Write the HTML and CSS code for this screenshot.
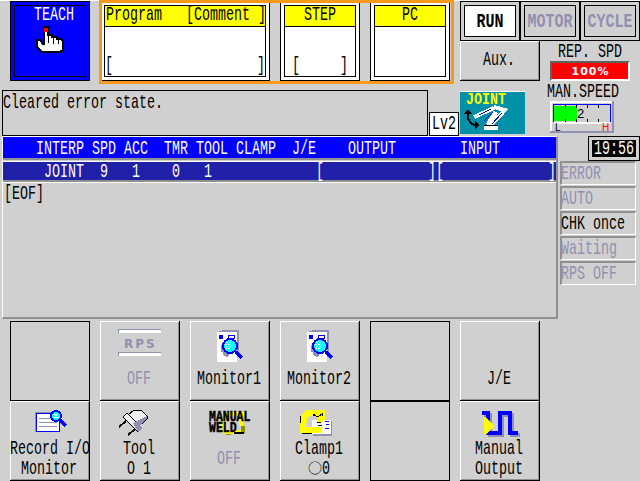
FILE: index.html
```
<!DOCTYPE html>
<html lang="en">
<head>
<meta charset="utf-8">
<title>Teach Pendant</title>
<link rel="stylesheet" href="styles.css">
</head>
<body>
<div id="top">
	<div class="left">
		<div class="header">
			<div class="frame teach">
				<div class="inner">
					<p class="t">TEACH</p>
					<svg class="hand" width="30" height="29" viewBox="35 27 30 29">
						<path d="M45 29h3v8h4v2h5v2h4l2 2v9l-3 2H42l-5-5v-7h3l3 4h1V29z" fill="#fff" stroke="#000" stroke-width="2"/>
						<path d="M48.500 37v8M53.500 39v7M58.500 41v5" stroke="#000"/>
						<path d="M44 30h4v4h-4z" fill="#f00"/>
					</svg>
				</div>
			</div>
			<div class="jobs">
				<div class="frame program">
					<div class="inner">
						<div class="title"><p class="t">Program   [Comment ]</p></div>
						<p class="t value">[                  ]</p>
					</div>
				</div>
				<div class="frame step">
					<div class="inner">
						<div class="title"><p class="t">STEP</p></div>
						<p class="t value">[     ]</p>
					</div>
				</div>
				<div class="frame pc">
					<div class="inner">
						<div class="title"><p class="t">PC</p></div>
					</div>
				</div>
			</div>
		</div>
		<div class="notice">
			<div class="message"><p class="t">Cleared error state.</p></div>
			<div class="level"><p class="t">Lv2</p></div>
		</div>
	</div>
	<div class="right">
		<div class="modes">
			<div class="frame run"><div class="inner"><p class="t">RUN</p></div></div>
			<div class="frame off"><div class="inner"><p class="t">MOTOR</p></div></div>
			<div class="frame off"><div class="inner"><p class="t">CYCLE</p></div></div>
		</div>
		<div class="controls">
			<div class="aux">
				<div class="key"><p class="t">Aux.</p></div>
				<svg class="joint" width="65" height="43" viewBox="0 0 65 43">
					<path d="M0 0h65v43H0z" fill="#0090a8"/>
					<path d="M0 .5h65" stroke="#fff"/>
					<path d="M8 21v7l3 4 3 2h4" fill="none" stroke="#000" stroke-width="2"/>
					<path d="M8 18l4 5H4zM20 34l-5-4v8z"/>
					<path d="M14 26l20-9M34 16l11 3-14 15" fill="none" stroke="#fff" stroke-width="4"/>
					<path d="M28 34l8-13" stroke="#fff" stroke-width="5"/>
					<path d="M24 35h14v4H24z" fill="#fff"/>
					<path d="M24 34.500h14" stroke="#000"/>
					<path d="M19 24l12-6M24 30l9-9M42 22l-10 11" stroke="#00f"/>
					<text x="6" y="11" class="jointText">JOINT</text>
				</svg>
			</div>
			<div class="speeds">
				<p class="t">REP. SPD</p>
				<div class="percent">100%</div>
				<p class="t man">MAN.SPEED</p>
				<svg class="meter" width="64" height="32" viewBox="0 0 64 32">
					<path d="M0 0h64v32H0z" fill="#9090b0"/>
					<path d="M0 0h62v30H0z" fill="#fff"/>
					<path d="M2 2h60v28H2z" fill="#d0d0d0"/>
					<path d="M4 21h56v2H4z" fill="#fff"/>
					<path d="M4 5h23v15H4z" fill="#0f0"/>
					<path d="M3.500 21V3.500h57V21" fill="none" stroke="#00f"/>
					<path d="M15.500 4v3M26.500 4v3M37.500 4v3M48.500 4v3M15.500 18v3M26.500 18v3M37.500 18v3M48.500 18v3" stroke="#000"/>
					<text x="27" y="17" class="num">2</text>
					<text x="5" y="30" class="lo">L</text>
					<text x="52" y="30" class="hi">H</text>
				</svg>
			</div>
		</div>
	</div>
</div>

<div id="middle">
	<div class="list">
		<div class="head"><p class="t">    INTERP SPD ACC  TMR TOOL CLAMP  J/E    OUTPUT        INPUT</p></div>
		<div class="row"><p class="t">     JOINT  9   1    0   1             [             ][             ]</p></div>
		<div class="eof"><p class="t">[EOF]</p></div>
	</div>
	<div class="side">
		<div class="clock"><div class="inner"><p class="t">19:56</p></div></div>
		<ul class="status">
			<li><p class="t">ERROR</p></li>
			<li><p class="t">AUTO</p></li>
			<li class="on"><p class="t">CHK once</p></li>
			<li><p class="t">Waiting</p></li>
			<li><p class="t">RPS OFF</p></li>
		</ul>
	</div>
</div>

<div id="keys">
	<div class="key empty"></div>
	<div class="key single off">
		<svg class="icon" width="80" height="46" viewBox="0 0 80 46">
			<path d="M18 8h43v4H18zM18 31h43v4H18z" fill="#fff"/>
			<path d="M18.500 12V8.500H61M18.500 35v-3.500H61" fill="none" stroke="#9090b0"/>
			<text x="24" y="27" class="rps">RPS</text>
		</svg>
		<p class="t">OFF</p>
	</div>
	<div class="key single">
		<svg class="icon" width="80" height="46" viewBox="0 0 80 46">
			<path d="M28 11l5-2h16v27h-4V11z" fill="#9090b0"/>
			<path d="M27 11h20v30H27z" fill="#fff"/>
			<path d="M31 24h7v8h1v3l-2 1-4-2v-3h-2z" fill="#9090b0"/>
			<path d="M29 14h4v4h-4z" fill="#00f"/>
			<path d="M38.500 14.500h6v3h-6z" fill="#fff" stroke="#00f"/>
			<path d="M46 31l6 6" stroke="#00f" stroke-width="4"/>
			<circle cx="40" cy="25" r="7" fill="#0ff" stroke="#00f" stroke-width="2"/>
			<path d="M36 21.500h5M35 23.500h7M36 25.500h6M35 27.500h5" stroke="#fff" stroke-dasharray="2 1"/>
		</svg>
		<p class="t">Monitor1</p>
	</div>
	<div class="key single">
		<svg class="icon" width="80" height="46" viewBox="0 0 80 46">
			<path d="M28 11l5-2h16v27h-4V11z" fill="#9090b0"/>
			<path d="M27 11h20v30H27z" fill="#fff"/>
			<path d="M31 24h7v8h1v3l-2 1-4-2v-3h-2z" fill="#9090b0"/>
			<path d="M29 14h4v4h-4z" fill="#00f"/>
			<path d="M38.500 14.500h6v3h-6z" fill="#fff" stroke="#00f"/>
			<path d="M46 31l6 6" stroke="#00f" stroke-width="4"/>
			<circle cx="40" cy="25" r="7" fill="#0ff" stroke="#00f" stroke-width="2"/>
			<path d="M36 21.500h5M35 23.500h7M36 25.500h6M35 27.500h5" stroke="#fff" stroke-dasharray="2 1"/>
		</svg>
		<p class="t">Monitor2</p>
	</div>
	<div class="key empty"></div>
	<div class="key single">
		<svg class="icon" width="80" height="46"></svg>
		<p class="t">J/E</p>
	</div>

	<div class="key">
		<svg class="icon" width="80" height="36" viewBox="0 0 80 36">
			<path d="M25.500 31V11.500H42" fill="none" stroke="#9090b0"/>
			<path d="M26.500 12.500h23v18h-23z" fill="#fff" stroke="#00f"/>
			<path d="M29 17.500h13M29 21.500h18M29 25.500h18" stroke="#9090b0"/>
			<path d="M50 19l6 6" stroke="#00f" stroke-width="3"/>
			<circle cx="46" cy="15" r="5" fill="#0ff" stroke="#00f" stroke-width="2"/>
			<path d="M43 13h4l-2 3h4" fill="none" stroke="#fff"/>
		</svg>
		<p class="t">Record I/O</p>
		<p class="t">Monitor</p>
	</div>
	<div class="key">
		<svg class="icon" width="80" height="36" viewBox="0 0 80 36">
			<path d="M19 26l7-6M28 34l7-6" stroke="#000" stroke-width="2"/>
			<path d="M28 14l6-5h7l6 6v3l-8 7z" fill="#f0f0f0" stroke="#000"/>
			<path d="M47 15v3l-8 7-4-4z" fill="#9090b0"/>
			<path d="M23 16l4-4 15 15-4 4z" fill="#f0f0f0" stroke="#000"/>
			<path d="M33 22l4-1 5 6-4 4z" fill="#9090b0"/>
		</svg>
		<p class="t">Tool</p>
		<p class="t">O 1</p>
	</div>
	<div class="key single off">
		<svg class="icon" width="80" height="46" viewBox="0 0 80 46">
			<path d="M34 32l-1-8 2-9 5-2h11v12" fill="none" stroke="#ff0" stroke-width="4"/>
			<path d="M35 31h17" stroke="#ff0" stroke-width="4"/>
			<path d="M51 25h4v7h-4zM36 33h5v1h-5z" fill="#909000"/>
			<path d="M44 32h10" stroke="#000" stroke-width="2"/>
			<text x="19" y="16" class="weld">MANUAL</text>
			<text x="19" y="25" class="weld">WELD</text>
		</svg>
		<p class="t">OFF</p>
	</div>
	<div class="key">
		<svg class="icon" width="80" height="36" viewBox="0 0 80 36">
			<path d="M20.500 31V15M22 32h12" stroke="#000" stroke-width="2"/>
			<path d="M42 20v-8H28l-4 4-1 13h19v-5" fill="none" stroke="#ff0" stroke-width="6"/>
			<path d="M33 20h19v15H33z" fill="#9090b0"/>
			<path d="M32 19h19v14H32z" fill="#fff"/>
			<path d="M26 26h16v6H26zM38 14h6v7h-6z" fill="#ff0"/>
			<path d="M33 15v-2l3 2h3l3-2v2" fill="none" stroke="#000"/>
			<path d="M37 21.500h4M38 24.500h4" stroke="#000"/>
			<path d="M45 20.500h4M46 23.500h3M45 27.500h4" stroke="#00f"/>
		</svg>
		<p class="t">Clamp1</p>
		<div class="clampNo"><span>○</span><p class="t">0</p></div>
	</div>
	<div class="key empty"></div>
	<div class="key">
		<svg class="icon" width="80" height="36" viewBox="0 0 80 36">
			<path d="M24 14h6v20h12V14h10v20h8" fill="none" stroke="#9090b0" stroke-width="4"/>
			<path d="M22 12h6v20h12V12h10v20h8" fill="none" stroke="#00f" stroke-width="4"/>
			<path d="M24 16h2l8 9-8 9h-2z" fill="#ff0"/>
		</svg>
		<p class="t">Manual</p>
		<p class="t">Output</p>
	</div>
</div>
</body>
</html>
```

FILE: styles.css
```
* {
	padding:0;
	margin:0;
	box-sizing:border-box;
}
body {
	width:640px;
	height:481px;
	overflow:hidden;
	background:#d0d0d0;
	color:#000;
}
ul {
	list-style-type:none;
}
svg {
	display:block;
	shape-rendering:crispEdges;
}
/* tall 8x20 character cell */
.t {
	font:13.33px/13px "Liberation Mono",monospace;
	white-space:pre;
	height:13px;
	margin-bottom:7px;
	transform:translateY(2px) scaleY(1.5);
	transform-origin:0 0;
}

/* beveled frames */
.frame {
	height:80px;
	border:1px solid #000;
	padding:3px;
	background:#fff;
}
.inner {
	height:100%;
	border:1px solid #000;
}

#top {
	height:136px;
	border-top:1px solid #fff;
	display:flex;
}
#top .left {
	width:460px;
}
.header {
	display:flex;
	height:89px;
}
.teach {
	width:80px;
	margin-left:10px;
	background:#00f;
	color:#fff;
}
.teach .t {
	text-align:center;
	margin-top:-3px;
	padding-left:8px;
}
.hand {
	margin:9px 0 0 20px;
}
.jobs {
	position:relative;
	display:flex;
	gap:10px;
	width:355px;
	height:83px;
	padding-left:1px;
	margin-left:9px;
}
.jobs:after {
	content:"";
	position:absolute;
	left:0;
	top:-1px;
	width:349px;
	height:78px;
	border:3px solid #f79a1c;
}
.program {
	width:170px;
}
.step,.pc {
	width:80px;
}
.title {
	display:flow-root;
	height:21px;
	background:#ff0;
	border-bottom:1px solid #000;
	text-align:center;
}
.title .t {
	margin-top:-3px;
}
.program .title .t {
	padding-left:1px;
	text-align:left;
}
.value {
	text-align:center;
	margin-top:27px;
}
.notice {
	display:flex;
	align-items:flex-end;
}
.message {
	width:426px;
	height:46px;
	margin-left:2px;
	border:1px solid #000;
}
.level {
	width:30px;
	height:24px;
	margin-left:1px;
	border:1px solid #000;
	background:#fff;
	padding-left:2px;
}
.level .t {
	margin-top:-1px;
}

.modes {
	display:flex;
}
.modes .frame {
	width:60px;
	height:40px;
	background:#d0d0d0;
}
.modes .t {
	font-weight:bold;
	font-size:15px;
	text-align:center;
	margin:4px -4px 0;
	transform:translateY(4px) scaleY(1.3);
}
.modes .run .inner {
	background:#fff;
}
.off {
	color:#9090b0;
}
.controls {
	display:flex;
	gap:10px;
}
.key {
	width:80px;
	height:80px;
	box-shadow:inset -1px -1px #000,inset 1px 1px #fff,inset -2px -2px #909090;
}
.key .t {
	text-align:center;
	margin-right:2px;
}
.aux .key {
	height:40px;
	margin-bottom:10px;
	padding-top:7px;
}
.jointText {
	font:bold 13.33px "Liberation Mono",monospace;
	transform:scaleY(1.2);
	fill:#ff0;
}
.speeds .t {
	padding-left:8px;
	margin-top:-1px;
	margin-bottom:8px;
}
.percent {
	width:80px;
	height:20px;
	border:2px solid;
	border-color:#606060 #fff #fff #606060;
	background:#f00;
	color:#fff;
	font:bold 11px/17px "DejaVu Sans",sans-serif;
	letter-spacing:1px;
	text-align:center;
	padding-left:1px;
}
.speeds .man {
	padding-left:0;
	margin-left:-3px;
}
.num {
	font:13px "Liberation Sans",sans-serif;
}
.lo,.hi {
	font:10px "Liberation Sans",sans-serif;
}
.hi {
	fill:#f00;
}

#middle {
	display:flex;
	height:185px;
}
.list {
	width:556px;
	height:183px;
	margin-left:2px;
	border:solid;
	border-width:1px 2px 2px 1px;
	border-color:#fff #909090 #909090 #fff;
}
.list .t {
	padding-left:1px;
}
.head {
	height:23px;
	background:#00f;
	color:#fff;
	border-bottom:2px solid #909090;
}
.row {
	height:21px;
	margin-top:1px;
	background:#2020a8;
	color:#fff;
	border-top:1px solid #fff;
	border-bottom:2px solid #909090;
}
.row .t {
	margin-top:-2px;
}
.eof {
	border-top:1px solid #fff;
}
.eof .t {
	margin-top:-1px;
}
.side {
	margin-left:2px;
}
.clock {
	width:52px;
	height:25px;
	margin-left:28px;
	border:1px solid #000;
	padding:3px;
}
.clock .inner {
	background:#000;
	color:#fff;
	padding-left:1px;
}
.clock .t {
	margin-top:-4px;
}
.status li {
	width:76px;
	height:24px;
	margin-bottom:1px;
	border:solid;
	border-color:#909090 #fff #fff #909090;
	border-width:2px 1px 1px 2px;
	color:#9090b0;
}
.status .t {
	margin-top:-1px;
	margin-left:-1px;
}
.status .on {
	color:#000;
}

#keys {
	display:grid;
	grid-template-columns:repeat(6,80px);
	column-gap:10px;
	margin-left:10px;
}
.empty {
	box-shadow:inset 0 0 0 1px #000;
}
.clampNo {
	display:flex;
	justify-content:center;
	height:20px;
}
.clampNo span {
	font:14px/20px "Noto Sans CJK JP",sans-serif;
}
.rps {
	font:bold 12px "DejaVu Sans",sans-serif;
	letter-spacing:2px;
	fill:#9090b0;
}
.weld {
	font:bold 11.5px "Liberation Mono",monospace;
	transform:scaleY(1.25);
	fill:#000;
	stroke:#000;
	stroke-width:.4px;
}
```
